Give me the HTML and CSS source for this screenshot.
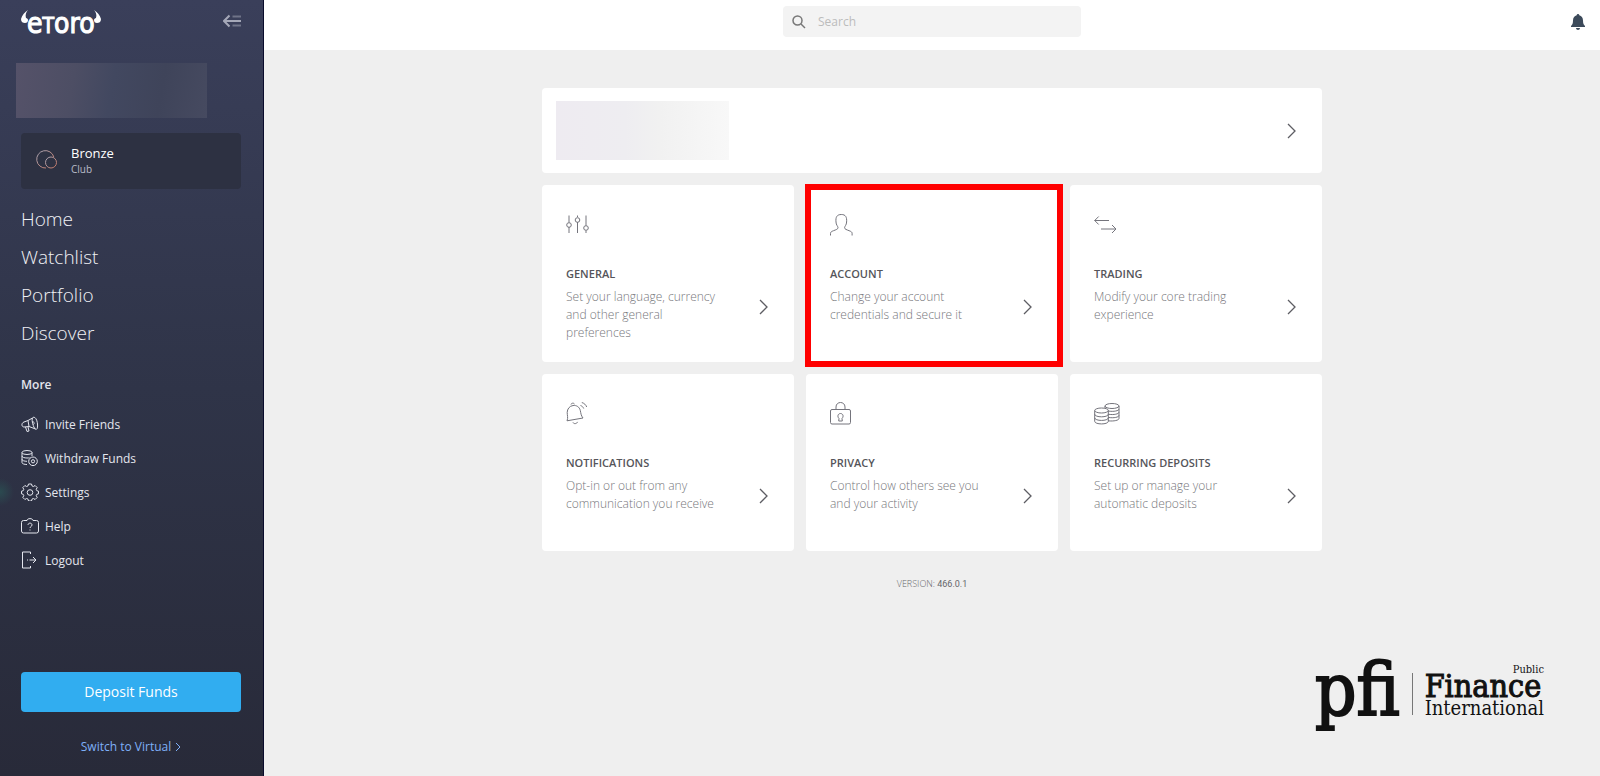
FILE: index.html
```html
<!DOCTYPE html>
<html lang="en">
<head>
<meta charset="utf-8">
<meta name="viewport" content="width=device-width, initial-scale=1">
<title>eToro Settings</title>
<link rel="stylesheet" href="styles.css">
</head>
<body>
<div class="app">
  <aside class="sidebar">
    <div class="brand-row">
      <a class="brand" href="#" aria-label="eToro">
        <svg class="horn" viewBox="0 0 8 14"><path d="M7 0C4 2 1 5 0 9c0 3 2 4 4 4 2 0 3-1 3-3 0-1-1-2-2-2-1-3 0-6 2-8z"/></svg>
        <span class="wordmark">e<span class="wordmark-t">T</span>oro</span>
        <svg class="horn" viewBox="0 0 8 14"><path d="M1 0c3 2 6 5 7 9 0 3-2 4-4 4-2 0-3-1-3-3 0-1 1-2 2-2 1-3 0-6-2-8z"/></svg>
      </a>
      <button class="collapse" type="button" aria-label="Collapse menu">
        <svg width="18" height="14" viewBox="0 0 18 14"><path d="M6.500 1.500L1 7l5.500 5.500M1 7h17" /><path class="faint" d="M9.500 2.500H18M9.500 11.500H18"/></svg>
      </button>
    </div>
    <div class="user-blur"></div>
    <a class="club" href="#">
      <svg width="22" height="20" viewBox="0 0 22 20"><defs><linearGradient id="bronze" x1="0" y1="0" x2="1" y2="1"><stop offset="0" stop-color="#a9a7b6"/><stop offset="1" stop-color="#c4735f"/></linearGradient></defs><g fill="none" stroke="url(#bronze)"><path d="M17.800 7A8.700 8.700 0 1 0 10 18"/><circle cx="15" cy="12.500" r="5.500"/></g></svg>
      <span class="club-text"><span class="club-name">Bronze</span><span class="club-label">Club</span></span>
    </a>
    <nav class="primary">
      <a href="#">Home</a>
      <a href="#">Watchlist</a>
      <a href="#">Portfolio</a>
      <a href="#">Discover</a>
    </nav>
    <h2 class="more">More</h2>
    <nav class="secondary">
      <a href="#"><svg width="18" height="18" viewBox="0 0 18 18"><path d="M11.500 3L7 5.500 3 7C0 8 .5 12 3 12l5-.5 6.500 2.500M7 5.500l1 6M4.500 12L6 16.500l2-.5-1-4M11.500 3C13 1 15.500 3 16.300 7.500s0 8-2 6.500-4-9-2.800-11zM11.500 6.500c2 0 2 3 .8 3"/></svg>Invite Friends</a>
      <a href="#"><svg width="18" height="18" viewBox="0 0 18 18"><ellipse cx="6" cy="3.500" rx="5" ry="2"/><path d="M1 3.500v10c0 1.300 2.500 2 5 2M11 3.500V7M1 7c0 1.300 2.500 2 5 2 1 0 1.800 0 2.500-.3M1 10.300c0 1.300 2.500 2 5 2"/><circle cx="12" cy="12.300" r="4.300"/><circle cx="12" cy="12.300" r="1.600"/></svg>Withdraw Funds</a>
      <a class="current" href="#"><svg width="18" height="18" viewBox="0 0 18 18"><path d="M7.500 1h3l.5 1.900 1.400.6 1.700-1 2.100 2.100-1 1.700.6 1.400 1.700.5v2.600l-1.700.5-.6 1.400 1 1.700-2.100 2.100-1.700-1-1.400.6-.5 1.900h-3L7 16.100l-1.400-.6-1.700 1-2.100-2.100 1-1.700-.6-1.400-1.700-.5V8.200l1.700-.5.6-1.400-1-1.700 2.100-2.100 1.700 1L7 2.900z"/><circle cx="9" cy="9.500" r="2.800"/></svg>Settings</a>
      <a href="#"><svg width="18" height="18" viewBox="0 0 18 18"><path d="M6 3.500H2.500a2 2 0 0 0-2 2V14a2 2 0 0 0 2 2h13a2 2 0 0 0 2-2V5.500a2 2 0 0 0-2-2H12M6 3.500c0-2.500 6-2.500 6 0M7 8c0-2.500 4-2.500 4 0 0 1.500-2 1.500-2 3M9 12.500v1"/></svg>Help</a>
      <a href="#"><svg width="18" height="18" viewBox="0 0 18 18"><path d="M9.500 3V1h-8v16h8v-2M6 9h1M8.500 9H15M12 6l3 3-3 3"/></svg>Logout</a>
    </nav>
    <div class="sidebar-foot">
      <button class="deposit" type="button">Deposit Funds</button>
      <a class="switch" href="#">Switch to Virtual <svg width="6" height="10" viewBox="0 0 6 10"><path d="M1 1l4 4-4 4"/></svg></a>
    </div>
  </aside>

  <div class="page">
    <header class="topbar">
      <label class="search">
        <svg width="14" height="14" viewBox="0 0 14 14"><circle cx="5.500" cy="5.500" r="4.500"/><path d="M9 9l4 4"/></svg>
        <input type="search" placeholder="Search" aria-label="Search">
      </label>
      <button class="alerts" type="button" aria-label="Notifications">
        <svg width="14" height="16" viewBox="0 0 14 16"><path d="M7 0c.8 0 1.300.6 1.300 1.300C10.500 2 12 3.800 12 6.500c0 3.200.7 4 2 5.500v1H0v-1c1.300-1.500 2-2.300 2-5.500C2 3.800 3.500 2 5.700 1.300 5.700.6 6.200 0 7 0zM5 14h4c0 2.500-4 2.500-4 0z"/></svg>
      </button>
    </header>

    <main class="content">
      <div class="cards">
        <a class="profile" href="#" aria-label="Profile">
          <span class="profile-blur"></span>
          <svg class="chevron" viewBox="0 0 9 16"><path d="M1 1l7 7-7 7"/></svg>
        </a>
        <a class="card" href="#">
          <svg class="card-icon" viewBox="0 0 26 24"><path d="M3 2.500v7M3 14v6M11.500 2.500v1.500M11.500 9v11M20 2.500v10M20 17.500v2.500"/><circle cx="3" cy="12" r="2.300"/><circle cx="11.500" cy="7" r="2.300"/><circle cx="20" cy="15" r="2.300"/></svg>
          <span class="card-body">
            <span class="card-text"><strong>GENERAL</strong><span>Set your language, currency and other general preferences</span></span>
            <svg class="chevron" viewBox="0 0 9 16"><path d="M1 1l7 7-7 7"/></svg>
          </span>
        </a>
        <a class="card marked" href="#">
          <svg class="card-icon" viewBox="0 0 26 24"><path d="M.5 22.500v-2c0-1.500 1-2 3-2.800 2.500-1 4.500-1.500 4.500-3 0-1.400-2-2.700-2-5.700C5.500 4 7 1.500 11.300 1.500S17 4 16.600 9c0 3-2 4.300-2 5.700 0 1.500 2 2 4.500 3 2 .8 3 1.300 3 2.800v2"/></svg>
          <span class="card-body">
            <span class="card-text"><strong>ACCOUNT</strong><span>Change your account credentials and secure it</span></span>
            <svg class="chevron" viewBox="0 0 9 16"><path d="M1 1l7 7-7 7"/></svg>
          </span>
        </a>
        <a class="card" href="#">
          <svg class="card-icon" viewBox="0 0 26 24"><path d="M.7 7.500H15M4.700 3.500l-4 4 4 4M7 16h15M18 12l4 4-4 4"/></svg>
          <span class="card-body">
            <span class="card-text"><strong>TRADING</strong><span>Modify your core trading experience</span></span>
            <svg class="chevron" viewBox="0 0 9 16"><path d="M1 1l7 7-7 7"/></svg>
          </span>
        </a>
        <a class="card" href="#">
          <svg class="card-icon" viewBox="0 1 26 24"><path d="M1 19.800c1.300-3 .2-5.500.2-8.300C1.200 8 3.500 5 7 4.500s6.500 1.500 7.300 5c.6 2.500.6 5 2.700 7.500zM5 3.500c.3-1.500 2.700-1.800 3.500-.5M7 21.500c1 1.800 4 1.300 4.500-.6M14.500 4.500c1.500.5 2.600 1.500 3.200 3M15.800 1.500c2.500.8 4 2.200 4.900 4.500"/></svg>
          <span class="card-body">
            <span class="card-text"><strong>NOTIFICATIONS</strong><span>Opt-in or out from any communication you receive</span></span>
            <svg class="chevron" viewBox="0 0 9 16"><path d="M1 1l7 7-7 7"/></svg>
          </span>
        </a>
        <a class="card" href="#">
          <svg class="card-icon" viewBox="0 1 26 24"><rect x=".5" y="8.500" width="20" height="14.500" rx="1.500"/><path d="M6 8.500V6c0-6 9-6 9 0v2.500M9 17.500c-2-2-1-5 1.500-5s3.500 3 1.500 5l.3 2.500H8.700z"/></svg>
          <span class="card-body">
            <span class="card-text"><strong>PRIVACY</strong><span>Control how others see you and your activity</span></span>
            <svg class="chevron" viewBox="0 0 9 16"><path d="M1 1l7 7-7 7"/></svg>
          </span>
        </a>
        <a class="card" href="#">
          <svg class="card-icon" viewBox="0 1 26 24"><ellipse cx="18" cy="5" rx="7" ry="2.500"/><path d="M11 5v2M25 5v12.500c0 1.700-5 3-11 2.300M25 8c0 1.700-5 3-11 2M25 11.200c0 1.700-5 3-11 2M25 14.400c0 1.700-5 3-11 2"/><ellipse cx="7.500" cy="9.500" rx="6.800" ry="2.500"/><path d="M.7 9.500v10.800c0 3.500 13.600 3.500 13.600 0V9.500M.7 13.200c0 3.500 13.600 3.500 13.600 0M.7 16.800c0 3.500 13.600 3.500 13.600 0"/></svg>
          <span class="card-body">
            <span class="card-text"><strong>RECURRING DEPOSITS</strong><span>Set up or manage your automatic deposits</span></span>
            <svg class="chevron" viewBox="0 0 9 16"><path d="M1 1l7 7-7 7"/></svg>
          </span>
        </a>
      </div>
      <p class="version">VERSION: <span>466.0.1</span></p>
    </main>

    <footer class="pfi">
      <span class="pfi-mark">pfi</span>
      <span class="pfi-rule"></span>
      <span class="pfi-name"><small>Public</small><b>Finance</b><span>International</span></span>
    </footer>
  </div>
</div>
</body>
</html>
```
FILE: styles.css
```css
* { box-sizing: border-box; }
body {
  margin: 0;
  font-family: "Open Sans", "Noto Sans", sans-serif;
  font-size: 12px;
  background: #efefef;
}
a { color: inherit; text-decoration: none; }
button { border: 0; padding: 0; background: none; font: inherit; cursor: pointer; }
svg { display: block; flex: none; fill: none; stroke: currentColor; }

.app { display: flex; min-height: 100vh; }

/* Sidebar */
.sidebar {
  flex: none;
  display: flex;
  flex-direction: column;
  width: 264px;
  padding: 8px 22px 19px 21px;
  color: #e4e6ee;
  background: linear-gradient(#3a3f5a, #2f3448 50%, #282a39);
  border-right: 1px solid #0a0c2c;
}
.brand-row { display: flex; justify-content: space-between; align-items: flex-start; height: 55px; }
.brand { display: flex; align-items: flex-start; color: #fff; }
.horn { width: 8px; height: 14px; margin-top: 2px; fill: #fff; stroke: none; }
.wordmark {
  margin: 0 -2px;
  font: 28px/32px "DejaVu Sans Condensed", "DejaVu Sans", sans-serif;
  -webkit-text-stroke: 1px #fff;
}
.wordmark-t { font-size: 21px; }
.collapse { margin-top: 6px; color: #a5a8b8; }
.collapse svg { stroke-width: 2; }
.faint { opacity: .5; }
.user-blur {
  width: 191px;
  height: 55px;
  margin-left: -5px;
  background: linear-gradient(100deg, #555269, #4d4e64 30%, #424860 50%, #3f445a 75%, #464a60);
}
.club {
  display: flex;
  align-items: center;
  gap: 13px;
  height: 56px;
  margin-top: 15px;
  padding: 0 0 2px 15px;
  border-radius: 4px;
  background: #2d3142;
}
.club-text { display: flex; flex-direction: column; }
.club-name { font-size: 13px; font-weight: 500; line-height: 17px; color: #fff; }
.club-label { font-size: 10px; line-height: 14px; color: #b9bcc9; }
.primary { display: flex; flex-direction: column; margin-top: 11px; font-size: 19px; font-weight: 300; line-height: 38px; color: #f0f1f5; }
.more { margin: 24px 0 0; font-size: 12px; font-weight: 600; line-height: 18px; }
.secondary { display: flex; flex-direction: column; margin-top: 13px; font-size: 12px; }
.secondary a { display: flex; align-items: center; gap: 6px; height: 34px; }
.secondary .current {
  margin-left: -21px;
  padding-left: 21px;
  background: radial-gradient(circle at 0 50%, #2b4a50, transparent 14px);
}
.sidebar-foot { display: flex; flex-direction: column; align-items: center; margin-top: auto; }
.deposit {
  width: 100%;
  height: 40px;
  padding-bottom: 2px;
  border-radius: 4px;
  color: #fff;
  background: #31adf0;
  font-size: 14px;
}
.switch { display: flex; align-items: center; gap: 4px; margin-top: 25px; font-size: 12px; line-height: 20px; color: #7fb0f8; }

/* Top bar */
.page { flex: 1; display: flex; flex-direction: column; min-width: 0; }
.topbar {
  display: grid;
  grid-template-columns: 1fr minmax(0, 298px) 1fr;
  align-items: center;
  height: 50px;
  padding: 0 15px 7px;
  background: #fff;
}
.search {
  grid-column: 2;
  display: flex;
  align-items: center;
  gap: 12px;
  height: 31px;
  padding: 0 9px;
  border-radius: 4px;
  color: #777;
  background: #f3f3f3;
}
.search svg { stroke-width: 1.500; }
.search input { flex: 1; min-width: 0; border: 0; padding: 0; outline: 0; background: none; font: inherit; color: #444; }
.search input::placeholder { color: #bcbcbc; opacity: 1; }
.alerts { justify-self: end; color: #3c4a5a; }
.alerts svg { fill: currentColor; stroke: none; }

/* Cards */
.content { padding: 38px 20px 0; }
.cards {
  display: grid;
  grid-template-columns: repeat(3, 1fr);
  gap: 12px;
  max-width: 780px;
  margin: 0 auto;
}
.profile, .card { border-radius: 4px; color: #5d5d63; background: #fff; }
.profile {
  grid-column: 1 / -1;
  display: flex;
  align-items: center;
  justify-content: space-between;
  padding: 13px 26px 13px 14px;
}
.profile-blur { width: 173px; height: 59px; background: linear-gradient(90deg, #eeebf1, #eeedf1 40%, #f1f1f1 60%, #f8f8f8); }
.chevron { width: 9px; height: 16px; stroke-width: 1.300; }
.card { position: relative; display: flex; flex-direction: column; min-height: 177px; padding: 28px 26px 13px 24px; }
.card-icon { width: 26px; height: 24px; color: #74747c; }
.card-body { flex: 1; display: flex; align-items: center; gap: 36px; margin-top: 28px; }
.card-text { flex: 1; align-self: flex-start; display: flex; flex-direction: column; gap: 5px; font-weight: 300; line-height: 18px; color: #77777c; }
.card-text strong { font-size: 11px; font-weight: 600; color: #55555a; }
.marked::after {
  content: "";
  position: absolute;
  inset: -1px -5px -5px -1px;
  border: 6px solid #f00;
  pointer-events: none;
}
.version { margin: 26px 0 0; text-align: center; font-size: 9px; font-weight: 300; line-height: 14px; color: #66666a; }
.version span { font-family: Roboto, sans-serif; font-weight: 400; }

/* Publisher mark */
.pfi {
  display: flex;
  align-self: flex-end;
  align-items: center;
  gap: 12px;
  margin: auto 56px 38px 20px;
  color: #111;
  font-family: "DejaVu Serif Condensed", "DejaVu Serif", serif;
}
.pfi-mark { padding-bottom: 8px; font-size: 72px; line-height: 80px; -webkit-text-stroke: 2px #111; }
.pfi-rule { width: 1px; height: 42px; background: #777; }
.pfi-name { display: flex; flex-direction: column; padding-bottom: 4px; }
.pfi-name small { align-self: flex-end; font-size: 11px; line-height: 8px; }
.pfi-name b { font-size: 32px; font-weight: 400; line-height: 24px; -webkit-text-stroke: 1px #111; }
.pfi-name span { font-size: 20px; line-height: 20px; }
```
